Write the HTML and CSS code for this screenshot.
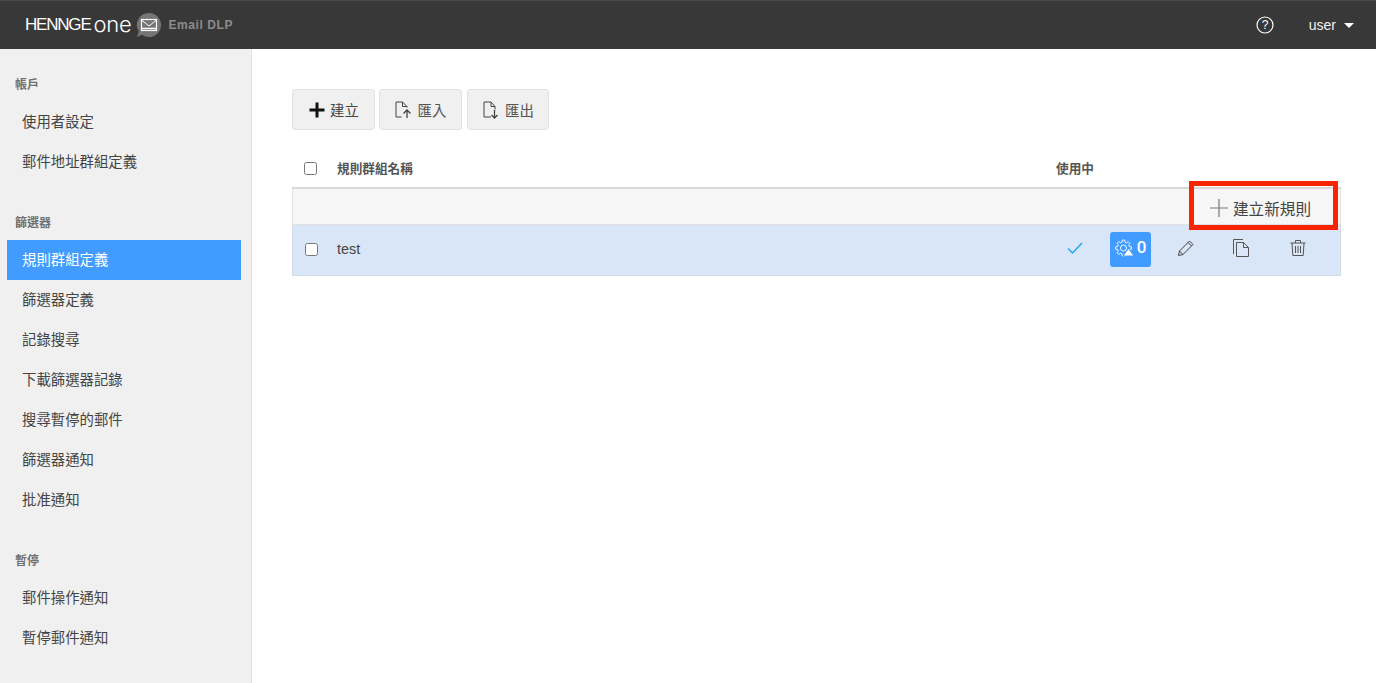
FILE: index.html
```html
<!DOCTYPE html>
<html lang="zh-Hant">
<head>
<meta charset="utf-8">
<title>Email DLP</title>
<link rel="stylesheet" href="styles.css">
</head>
<body>
<header class="topbar">
  <div class="brand">
    <span class="brand-name">HENNGE</span><span class="brand-one">one</span>
    <svg class="brand-icon" width="26" height="26" viewBox="0 0 26 26"><path d="M13 1a12 12 0 1 1-7 21.700L1 25l1.800-5.500A12 12 0 0 1 13 1z" fill="#757575"/><rect x="5.500" y="7.500" width="15" height="11" fill="none" stroke="#fff" stroke-width="1.200"/><path d="M5.500 8l7.500 6 7.500-6" fill="none" stroke="#fff" stroke-width="1"/><path d="M5 16.500h16" stroke="#fff" stroke-width="1.500"/></svg>
    <span class="brand-app">Email DLP</span>
  </div>
  <div class="top-actions">
    <svg class="help" width="18" height="18" viewBox="0 0 18 18"><circle cx="9" cy="9" r="8" fill="none" stroke="#fff" stroke-width="1.200"/><text x="9" y="13" text-anchor="middle" class="help-mark">?</text></svg>
    <span class="user">user</span>
    <span class="caret"></span>
  </div>
</header>
<div class="layout">
  <nav class="sidebar">
    <div class="nav-group">
      <div class="nav-title">帳戶</div>
      <a class="nav-item">使用者設定</a>
      <a class="nav-item">郵件地址群組定義</a>
    </div>
    <div class="nav-group">
      <div class="nav-title">篩選器</div>
      <a class="nav-item active">規則群組定義</a>
      <a class="nav-item">篩選器定義</a>
      <a class="nav-item">記錄搜尋</a>
      <a class="nav-item">下載篩選器記錄</a>
      <a class="nav-item">搜尋暫停的郵件</a>
      <a class="nav-item">篩選器通知</a>
      <a class="nav-item">批准通知</a>
    </div>
    <div class="nav-group">
      <div class="nav-title">暫停</div>
      <a class="nav-item">郵件操作通知</a>
      <a class="nav-item">暫停郵件通知</a>
    </div>
  </nav>
  <main class="content">
    <div class="toolbar">
      <button class="btn btn-create">
        <svg width="16" height="16" viewBox="0 0 16 16"><path d="M6.500 0.500h3v6h6v3h-6v6h-3v-6h-6v-3h6z" fill="#111"/></svg>
        <span>建立</span>
      </button>
      <button class="btn">
        <svg width="18" height="18" viewBox="0 0 18 18" fill="none" stroke="#444" stroke-width="1"><path d="M6.500 16H1V1h6.500L12 5.500v1"/><path d="M7.500 1v4.500H12"/><path d="M12 17V9M8.500 12.500L12 9l3.500 3.500" stroke-width="1.300"/></svg>
        <span>匯入</span>
      </button>
      <button class="btn">
        <svg width="18" height="18" viewBox="0 0 18 18" fill="none" stroke="#444" stroke-width="1"><path d="M9 16H2V1h7l4 4.500v3"/><path d="M9 1v4.500h4"/><path d="M12.500 9v8M9.500 14l3 3 3-3" stroke-width="1.300"/></svg>
        <span>匯出</span>
      </button>
    </div>
    <div class="table">
      <div class="row head-row">
        <input type="checkbox" class="check">
        <div class="col-name">規則群組名稱</div>
        <div class="col-active">使用中</div>
      </div>
      <div class="row add-row">
        <span class="add-rule">
          <svg width="18" height="18" viewBox="0 0 18 18"><path d="M9 0v18M0 9h18" stroke="#777" stroke-width="1.200"/></svg>
          <span>建立新規則</span>
        </span>
        <span class="highlight"></span>
      </div>
      <div class="row data-row">
        <input type="checkbox" class="check">
        <div class="col-name">test</div>
        <div class="col-active">
          <svg width="18" height="14" viewBox="0 0 18 14"><path d="M2 7.500l4.500 4.500L16 2" fill="none" stroke="#1ea7f5" stroke-width="1.500"/></svg>
        </div>
        <div class="rule-badge">
          <svg width="20" height="20" viewBox="0 0 20 20"><g transform="translate(8.500 9)"><path d="M5.820-1.450L7.900-1.250V1.250L5.820 1.450L5.140 3.090L6.470 4.700L4.700 6.470L3.090 5.140L1.450 5.820L1.250 7.900H-1.250L-1.450 5.820L-3.090 5.140L-4.700 6.470L-6.470 4.700L-5.140 3.090L-5.820 1.450L-7.900 1.250V-1.250L-5.820-1.450L-5.140-3.090L-6.470-4.700L-4.700-6.470L-3.090-5.140L-1.450-5.820L-1.250-7.900H1.250L1.450-5.820L3.090-5.140L4.700-6.470L6.470-4.700L5.140-3.090z" fill="none" stroke="#fff" stroke-width="0.900"/><circle r="3" fill="none" stroke="#fff" stroke-width="0.900"/></g><path d="M13.500 9.500l5.500 7.500H8z" fill="#fff" stroke="#429bff" stroke-width="1"/></svg>
          <span class="badge-count">0</span>
        </div>
        <svg class="act act-edit" width="18" height="18" viewBox="0 0 18 18" fill="none" stroke="#444" stroke-width="1"><path d="M1.500 16.500l1-4.500L12.500 2l3.500 3.500L6 15.500z"/><path d="M2.500 12l3.500 3.500M11 3.500L14.500 7"/></svg>
        <svg class="act act-copy" width="18" height="18" viewBox="0 0 18 18" fill="none" stroke="#555" stroke-width="1"><path d="M.5 15V.5h9.500"/><path d="M3.500 3.500h7l5 5v9h-12z"/><path d="M10.500 3.500v5h5"/></svg>
        <svg class="act act-trash" width="18" height="18" viewBox="0 0 18 18" fill="none" stroke="#555" stroke-width="1"><path d="M1.500 4h15M6.500 4V1.500h5V4M3 4l.8 12.500h10.400L15 4M6.500 7v7M9 7v7M11.500 7v7"/></svg>
      </div>
    </div>
  </main>
</div>
</body>
</html>
```

FILE: styles.css
```css
* { box-sizing: border-box; }
html, body { margin: 0; height: 100%; }
body {
  font-family: "Liberation Sans", "Noto Sans CJK TC", sans-serif;
  font-size: 14.4px;
  color: #444;
  background: #fff;
  overflow: hidden;
}
.topbar {
  height: 49px;
  background: #383838;
  border-top: 1px solid #4a4a4a;
  display: flex;
  align-items: center;
  justify-content: space-between;
  padding: 0 22px 0 25px;
  color: #fff;
}
.brand { display: flex; align-items: center; }
.brand-name {
  font-family: "Liberation Sans", sans-serif;
  font-size: 17px;
  letter-spacing: -1.2px;
  color: #fff;
}
.brand-one {
  font-family: "Inter", sans-serif;
  font-size: 22px;
  font-weight: 300;
  letter-spacing: -0.3px;
  margin-left: 3px;
  line-height: 20px;
  margin-top: -3px;
}
.brand-icon { margin-left: 5px; }
.brand-app {
  margin-left: 6px;
  font-size: 12px;
  font-weight: bold;
  letter-spacing: 0.6px;
  color: #8c8c8c;
}
.top-actions { display: flex; align-items: center; }
.help-mark { font-size: 12px; fill: #fff; font-family: "Liberation Sans", sans-serif; }
.user { margin-left: 35px; font-size: 14px; color: #f0f0f0; }
.caret {
  margin-left: 8px;
  width: 0;
  height: 0;
  border-left: 5px solid transparent;
  border-right: 5px solid transparent;
  border-top: 5px solid #fff;
}
.layout { display: flex; height: 634px; }
.sidebar {
  width: 252px;
  flex: none;
  background: #f0f0f0;
  border-right: 1px solid #e2e2e2;
  padding: 27px 10px 0 7px;
}
.nav-group { margin-bottom: 32px; }
.nav-title {
  height: 18px;
  line-height: 18px;
  font-size: 12px;
  font-weight: bold;
  color: #707070;
  padding-left: 8px;
  margin-bottom: 8px;
}
.nav-item {
  display: block;
  height: 40px;
  line-height: 40px;
  padding-left: 15px;
  color: #444;
}
.nav-item.active { background: #429bff; color: #fff; }
.content { flex: 1; padding: 40px 35px 0 40px; }
.toolbar { display: flex; gap: 4px; }
.btn {
  height: 41px;
  width: 83px;
  display: flex;
  align-items: center;
  justify-content: center;
  gap: 5px;
  padding: 0;
  background: #f0f0f0;
  border: 1px solid #e2e2e2;
  border-radius: 3px;
  font: inherit;
  color: #555;
}
.btn-create { color: #444; padding-left: 1px; }
.btn + .btn + .btn { margin-left: 1px; width: 82px; }
.table { margin-top: 20px; }
.row { position: relative; display: flex; align-items: center; }
.check { width: 13px; height: 13px; margin: 0; flex: none; }
.col-name { flex: 1; }
.col-active { width: 38px; text-align: center; }
.head-row {
  height: 39px;
  padding-left: 12px;
  padding-bottom: 2px;
  border-bottom: 2px solid #d8d8d8;
  font-size: 12.67px;
  font-weight: bold;
  color: #555;
  padding-right: 247px;
}
.head-row .check { margin-top: 2px; }
.head-row .col-name { margin-left: 20px; }
.add-row {
  height: 36px;
  background: #f6f6f6;
  border: 1px solid #e0e0e0;
  border-top: 0;
  justify-content: flex-end;
  padding-top: 2px;
  padding-right: 29px;
  z-index: 1;
}
.add-rule { display: flex; align-items: center; gap: 5px; color: #444; font-size: 15.6px; }
.highlight {
  position: absolute;
  left: 896px;
  top: -8px;
  width: 149px;
  height: 49px;
  border: 5px solid #f92500;
}
.data-row {
  height: 51px;
  background: #d9e6f7;
  border: 1px solid #d3dbe6;
  border-top: 0;
  padding-left: 12px;
  padding-right: 33px;
  padding-bottom: 2px;
}
.data-row .col-name { margin-left: 19px; }
.data-row .col-active { width: 38px; margin-right: 16px; }
.rule-badge {
  width: 41px;
  height: 35px;
  background: #429bff;
  border-radius: 3px;
  display: flex;
  align-items: center;
  justify-content: center;
  gap: 2px;
  color: #fff;
}
.badge-count { font-family: "Roboto", sans-serif; font-size: 17px; font-weight: 500; margin-top: -4px; }
.act { flex: none; margin-bottom: 2px; }
.act-edit { margin-left: 26px; }
.act-copy { margin-left: 38px; }
.act-trash { margin-left: 38px; }
```
